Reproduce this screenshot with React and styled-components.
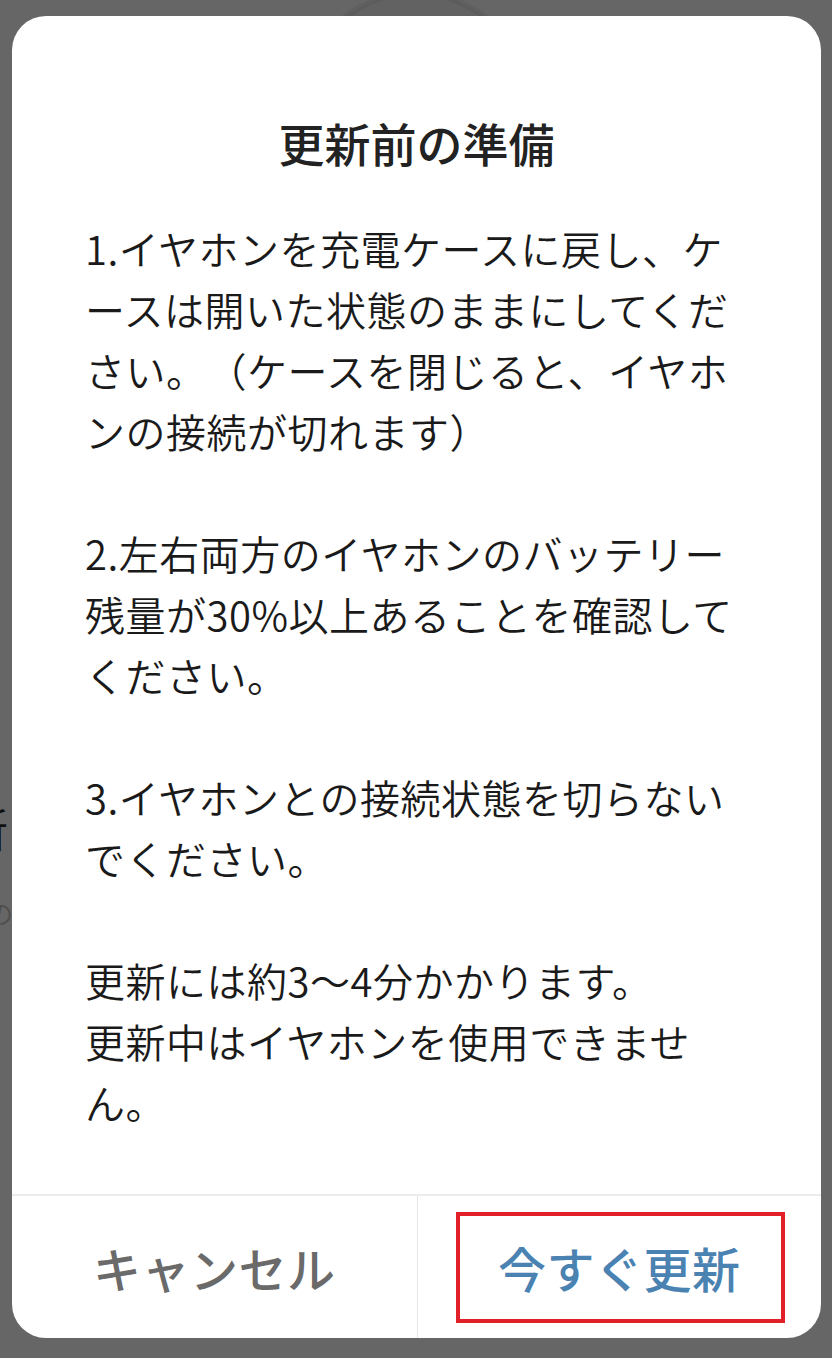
import React from 'react';
import styled, { createGlobalStyle } from 'styled-components';

const GlobalStyle = createGlobalStyle`
  html, body {
    margin: 0;
    padding: 0;
    background: #666666;
  }
  * {
    box-sizing: border-box;
  }
`;

const FONT = `"Noto Sans CJK JP", "Noto Sans", sans-serif`;

// dimmed page that sits behind the dialog
const Screen = styled.div`
  position: relative;
  min-height: 100vh;
  padding: 16px 11px 19px 12px;
  background: #666666;
  overflow: hidden;
  font-family: ${FONT};
`;

const BackdropRing = styled.svg`
  position: absolute;
  top: 0;
  left: 0;
  width: 832px;
  height: 240px;
`;

const BackdropText = styled.div`
  position: absolute;
  top: ${(p) => p.top}px;
  right: calc(100% - ${(p) => p.edge}px);
  white-space: nowrap;
  font-size: ${(p) => p.size}px;
  font-weight: 350;
  line-height: 1;
  color: ${(p) => p.color};
`;

const Dialog = styled.div`
  position: relative;
  display: flex;
  flex-direction: column;
  width: 809px;
  background: #ffffff;
  border-radius: 34px;
  overflow: hidden;
`;

const Title = styled.h2`
  margin: 96px 0 0;
  font-size: 46px;
  line-height: 60px;
  font-weight: 500;
  color: #222222;
  text-align: center;
`;

const Body = styled.div`
  width: 660px;
  margin: 46px 0 61px 73px;
  font-size: 40px;
  font-weight: 350;
  line-height: 61px;
  letter-spacing: 0.5px;
  color: #1a1a1a;
  line-break: loose;
  text-spacing-trim: space-all;
`;

const Para = styled.p`
  margin: 0;
  & + & {
    margin-top: 61px;
  }
`;

const Footer = styled.div`
  display: grid;
  grid-template-columns: 1fr 1fr;
  height: 144px;
  border-top: 2px solid #ececec;
`;

const ActionButton = styled.button`
  position: relative;
  display: flex;
  align-items: center;
  justify-content: center;
  padding: 0;
  border: none;
  background: transparent;
  font-family: ${FONT};
  font-size: 48px;
  font-weight: 500;
  letter-spacing: 0.5px;
  color: ${(p) => p.color};
  cursor: pointer;

  & + & {
    border-left: 1px solid #e6e6e6;
  }
`;

// red frame drawn over the confirm button
const Highlight = styled.span`
  position: absolute;
  top: 16px;
  right: 36px;
  bottom: 15px;
  left: 38px;
  border: 4px solid #e2202a;
  pointer-events: none;
`;

const paragraphs = [
  '1.イヤホンを充電ケースに戻し、ケースは開いた状態のままにしてください。（ケースを閉じると、イヤホンの接続が切れます）',
  '2.左右両方のイヤホンのバッテリー残量が30%以上あることを確認してください。',
  '3.イヤホンとの接続状態を切らないでください。',
];

export default function App() {
  return (
    <>
      <GlobalStyle />
      <Screen>
        <BackdropRing viewBox="0 0 832 240">
          <circle cx="415" cy="107" r="114" fill="rgba(0,0,0,0.03)" stroke="rgba(0,0,0,0.06)" strokeWidth="6" />
        </BackdropRing>
        <BackdropText top={804} edge={8} size={46} color="#111111">
          ファームウェア更新
        </BackdropText>
        <BackdropText top={900} edge={13} size={26} color="#4e4e4e">
          最新のバージョンの
        </BackdropText>

        <Dialog>
          <Title>更新前の準備</Title>
          <Body>
            {paragraphs.map((text) => (
              <Para key={text}>{text}</Para>
            ))}
            <Para>
              更新には約3〜4分かかります。
              <br />
              更新中はイヤホンを使用できません。
            </Para>
          </Body>
          <Footer>
            <ActionButton color="#6a6a6a">キャンセル</ActionButton>
            <ActionButton color="#4a82b2">
              今すぐ更新
              <Highlight />
            </ActionButton>
          </Footer>
        </Dialog>
      </Screen>
    </>
  );
}
